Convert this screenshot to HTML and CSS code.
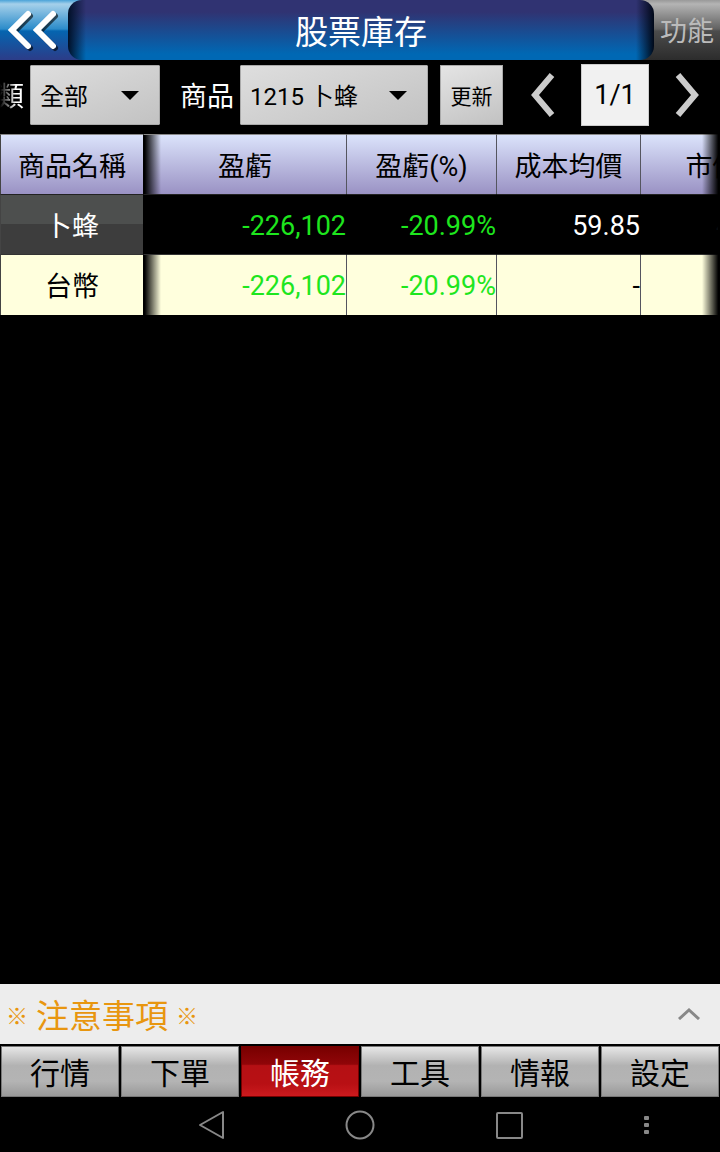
FILE: index.html
```
<!DOCTYPE html>
<html lang="zh-Hant">
    <head>
        <meta charset="utf-8">
        <meta name="viewport" content="width=device-width, initial-scale=1">
        <title>股票庫存</title>
        <link rel="stylesheet" href="styles.css">
    </head>
    <body>
        <header class="top_bar">
            <button type="button" class="back" aria-label="返回">
                <svg width="54" height="44" viewBox="0 0 54 44" fill="none" stroke-width="6" stroke-linecap="round" stroke-linejoin="miter">
                    <path d="M23 8L7 24L23 40M48 8L32 24L48 40" stroke="#000" stroke-opacity=".6"/>
                    <path d="M21 6L5 22L21 38M46 6L30 22L46 38" stroke="#fff"/>
                </svg>
            </button>
            <h1 class="title">股票庫存</h1>
            <button type="button" class="func">功能</button>
        </header>

        <form class="filter">
            <label class="label_cut" for="kind"><span>分類</span></label>
            <div class="select select_kind">
                <select id="kind"><option>全部</option></select>
                <svg class="arrow" width="18" height="9" viewBox="0 0 18 9"><path d="M0 0H18L9 9Z"/></svg>
            </div>
            <label class="label_goods" for="goods">商品</label>
            <div class="select select_goods">
                <select id="goods"><option>1215 卜蜂</option></select>
                <svg class="arrow" width="18" height="9" viewBox="0 0 18 9"><path d="M0 0H18L9 9Z"/></svg>
            </div>
            <button type="button" class="refresh">更新</button>
            <div class="pager">
                <button type="button" class="step" aria-label="上一頁">
                    <svg width="24" height="46" viewBox="0 0 24 46" fill="none" stroke="#ccc" stroke-width="6"><path d="M21 3L4 23L21 43"/></svg>
                </button>
                <button type="button" class="page_no">1/1</button>
                <button type="button" class="step" aria-label="下一頁">
                    <svg width="24" height="46" viewBox="0 0 24 46" fill="none" stroke="#ccc" stroke-width="6"><path d="M3 3L20 23L3 43"/></svg>
                </button>
            </div>
        </form>

        <main class="stock">
            <div class="stock_scroll">
                <table>
                    <colgroup>
                        <col class="col_name"><col class="col_profit"><col class="col_rate"><col class="col_cost"><col class="col_price">
                    </colgroup>
                    <thead>
                        <tr><th class="name">商品名稱</th><th>盈虧</th><th>盈虧(%)</th><th>成本均價</th><th>市價</th></tr>
                    </thead>
                    <tbody>
                        <tr class="item">
                            <th class="name">卜蜂</th><td class="down">-226,102</td><td class="down">-20.99%</td><td>59.85</td><td>47.45</td>
                        </tr>
                        <tr class="total">
                            <th class="name">台幣</th><td class="down">-226,102</td><td class="down">-20.99%</td><td>-</td><td></td>
                        </tr>
                    </tbody>
                </table>
            </div>
        </main>

        <button type="button" class="notice">
            <span class="notice_text"><span class="mark">※</span>注意事項<span class="mark">※</span></span>
            <svg width="22" height="12" viewBox="0 0 22 12" fill="none" stroke="#888" stroke-width="3"><path d="M1 11L11 2L21 11"/></svg>
        </button>

        <nav class="menu">
            <button type="button">行情</button>
            <button type="button">下單</button>
            <button type="button" class="active">帳務</button>
            <button type="button">工具</button>
            <button type="button">情報</button>
            <button type="button">設定</button>
        </nav>

        <div class="system">
            <button type="button" class="sys_back" aria-label="後退">
                <svg width="28" height="30" viewBox="0 0 28 30" fill="none" stroke="#888" stroke-width="2" stroke-linejoin="round"><path d="M25 2V28L2 15Z"/></svg>
            </button>
            <button type="button" aria-label="主畫面">
                <svg width="30" height="30" viewBox="0 0 30 30" fill="none" stroke="#888" stroke-width="2"><circle cx="15" cy="15" r="13.5"/></svg>
            </button>
            <button type="button" aria-label="最近使用">
                <svg width="30" height="30" viewBox="0 0 30 30" fill="none" stroke="#888" stroke-width="2"><rect x="4" y="3" width="25" height="25" rx="1"/></svg>
            </button>
            <button type="button" aria-label="更多">
                <svg width="6" height="20" viewBox="0 0 6 20" fill="#888"><rect x="1" y="1" width="5" height="4" rx="1"/><rect x="1" y="8" width="5" height="4" rx="1"/><rect x="1" y="15" width="5" height="4" rx="1"/></svg>
            </button>
        </div>
    </body>
</html>
```
FILE: styles.css
```
* {
    box-sizing:border-box;
}
body {
    display:flex;
    flex-direction:column;
    min-height:100vh;
    margin:0;
    background:#000;
    color:#fff;
    font-family:Roboto, "Noto Sans CJK TC", sans-serif;
    font-size:27px;
    line-height:36px;
}
button, select {
    margin:0;
    padding:0;
    border:0;
    background:none;
    color:inherit;
    font:inherit;
    white-space:nowrap;
}
svg {
    display:block;
}

/* 標題列 */
.top_bar {
    display:flex;
    height:60px;
    background:
        linear-gradient(#4aa3d8, #a5d0ea 4px, #2c8cca 29px, #0565b0 31px, #2c3c88) left / 50% 100% no-repeat,
        linear-gradient(#999, #b4b4b4 4px, #626262 29px, #4c4c4c 31px, #2c2c2c) right / 50% 100% no-repeat;
}
.back {
    width:68px;
    padding:0 0 0 7px;
}
.title {
    flex:1;
    margin:0;
    border-radius:14px;
    background:
        linear-gradient(90deg, #001028, transparent 18px, transparent calc(100% - 18px), #000818),
        linear-gradient(#303372 20%, #0068b4 90%);
    text-align:center;
    font-size:33px;
    font-weight:400;
    line-height:66px;
}
.func {
    width:66px;
    padding-top:4px;
    color:#bbb;
}

/* 篩選列 */
.filter {
    display:flex;
    align-items:center;
    height:74px;
    padding-bottom:4px;
}
.filter label {
    padding-top:4px;
}
.label_cut {
    display:flex;
    justify-content:flex-end;
    width:24px;
    overflow:hidden;
    white-space:nowrap;
    -webkit-mask-image:linear-gradient(90deg, transparent, #000 16px);
    mask-image:linear-gradient(90deg, transparent, #000 16px);
}
.label_goods {
    margin:0 6px 0 20px;
}
.select {
    position:relative;
    height:60px;
}
.select_kind {
    flex:130;
    margin-left:6px;
}
.select_goods {
    flex:188;
}
.select select {
    -webkit-appearance:none;
    appearance:none;
    width:100%;
    height:100%;
    padding:4px 0 0 9px;
    border:1px solid #aaa;
    border-radius:1px;
    background:linear-gradient(160deg, #dedede, #c2c2c2);
    color:#000;
    font-size:24px;
}
.arrow {
    position:absolute;
    top:50%;
    right:21px;
    margin-top:-4px;
    pointer-events:none;
}
.refresh {
    width:63px;
    height:60px;
    margin-left:12px;
    padding-top:4px;
    border:1px solid #aaa;
    background:linear-gradient(160deg, #e4e4e4, #c2c2c2);
    color:#000;
    font-size:21px;
}
.pager {
    display:flex;
    align-items:center;
    gap:26px;
    margin:0 21px 0 28px;
}
.page_no {
    width:68px;
    height:62px;
    border:1px solid #ccc;
    background:#f1f1f1;
    color:#000;
}

/* 庫存表 */
.stock {
    flex:1;
    position:relative;
}
.stock_scroll {
    position:relative;
    overflow:hidden;
}
.stock_scroll::after {
    content:"";
    position:absolute;
    top:0;
    right:0;
    width:18px;
    height:100%;
    background:linear-gradient(90deg, transparent, #000 90%);
}
table {
    width:785px;
    border-collapse:separate;
    border-spacing:0;
    table-layout:fixed;
}
.col_name, .col_cost, .col_price {
    width:144px;
}
.col_profit {
    width:203px;
}
.col_rate {
    width:150px;
}
th, td {
    height:60px;
    padding:4px 0 0;
    border-right:1px solid #55555f;
    font-weight:400;
    text-align:center;
}
td {
    padding-top:2px;
    text-align:right;
}
thead th {
    border-top:1px solid #888;
    background:linear-gradient(#dbe3fb, #9a92c4);
    color:#000;
}
.name {
    position:relative;
    border-right-color:#000;
    border-left:1px solid #444;
}
.name::after {
    content:"";
    position:absolute;
    top:0;
    left:100%;
    width:18px;
    height:100%;
    background:linear-gradient(90deg, #000 10%, transparent);
}
.item .name {
    background:linear-gradient(#4d4f4e 50%, #3d3d3d 50%);
}
.item td {
    border-color:#000;
}
.item th, .item td {
    height:61px;
    border-top:1px solid #222;
    border-bottom:1px solid #333;
}
.total {
    background:#ffffdd;
    color:#000;
}
.down {
    color:#1ee61e;
}

/* 注意事項 */
.notice {
    display:flex;
    align-items:center;
    justify-content:space-between;
    height:60px;
    padding:0 20px 0 6px;
    background:#ededed;
    color:#e8960f;
    font-size:33px;
}
.notice_text {
    display:flex;
    align-items:center;
    gap:8px;
    padding-top:6px;
}
.mark {
    font-size:22px;
    font-weight:700;
}

/* 底部選單 */
.menu {
    display:grid;
    grid-template-columns:repeat(6, 1fr);
    gap:2px;
    padding:2px 1px 1px;
}
.menu button {
    height:51px;
    padding-top:4px;
    border:1px solid #777;
    background:linear-gradient(#e6e6e6, #b2b2b2 38%, #b4b4b4 70%, #999);
    color:#000;
    font-size:30px;
}
.menu .active {
    border-color:#700;
    background:linear-gradient(#780000, #900508 35%, #b51014 38%, #b81014 75%, #cc1a1e);
    color:#fff;
}

/* 系統按鍵 */
.system {
    display:grid;
    grid-template-columns:1fr 148px 148px 148px 1fr;
    align-items:center;
    height:54px;
}
.system button {
    display:flex;
    justify-content:center;
}
.sys_back {
    grid-column:2;
}
.system button:last-child {
    padding-right:10px;
}
```
